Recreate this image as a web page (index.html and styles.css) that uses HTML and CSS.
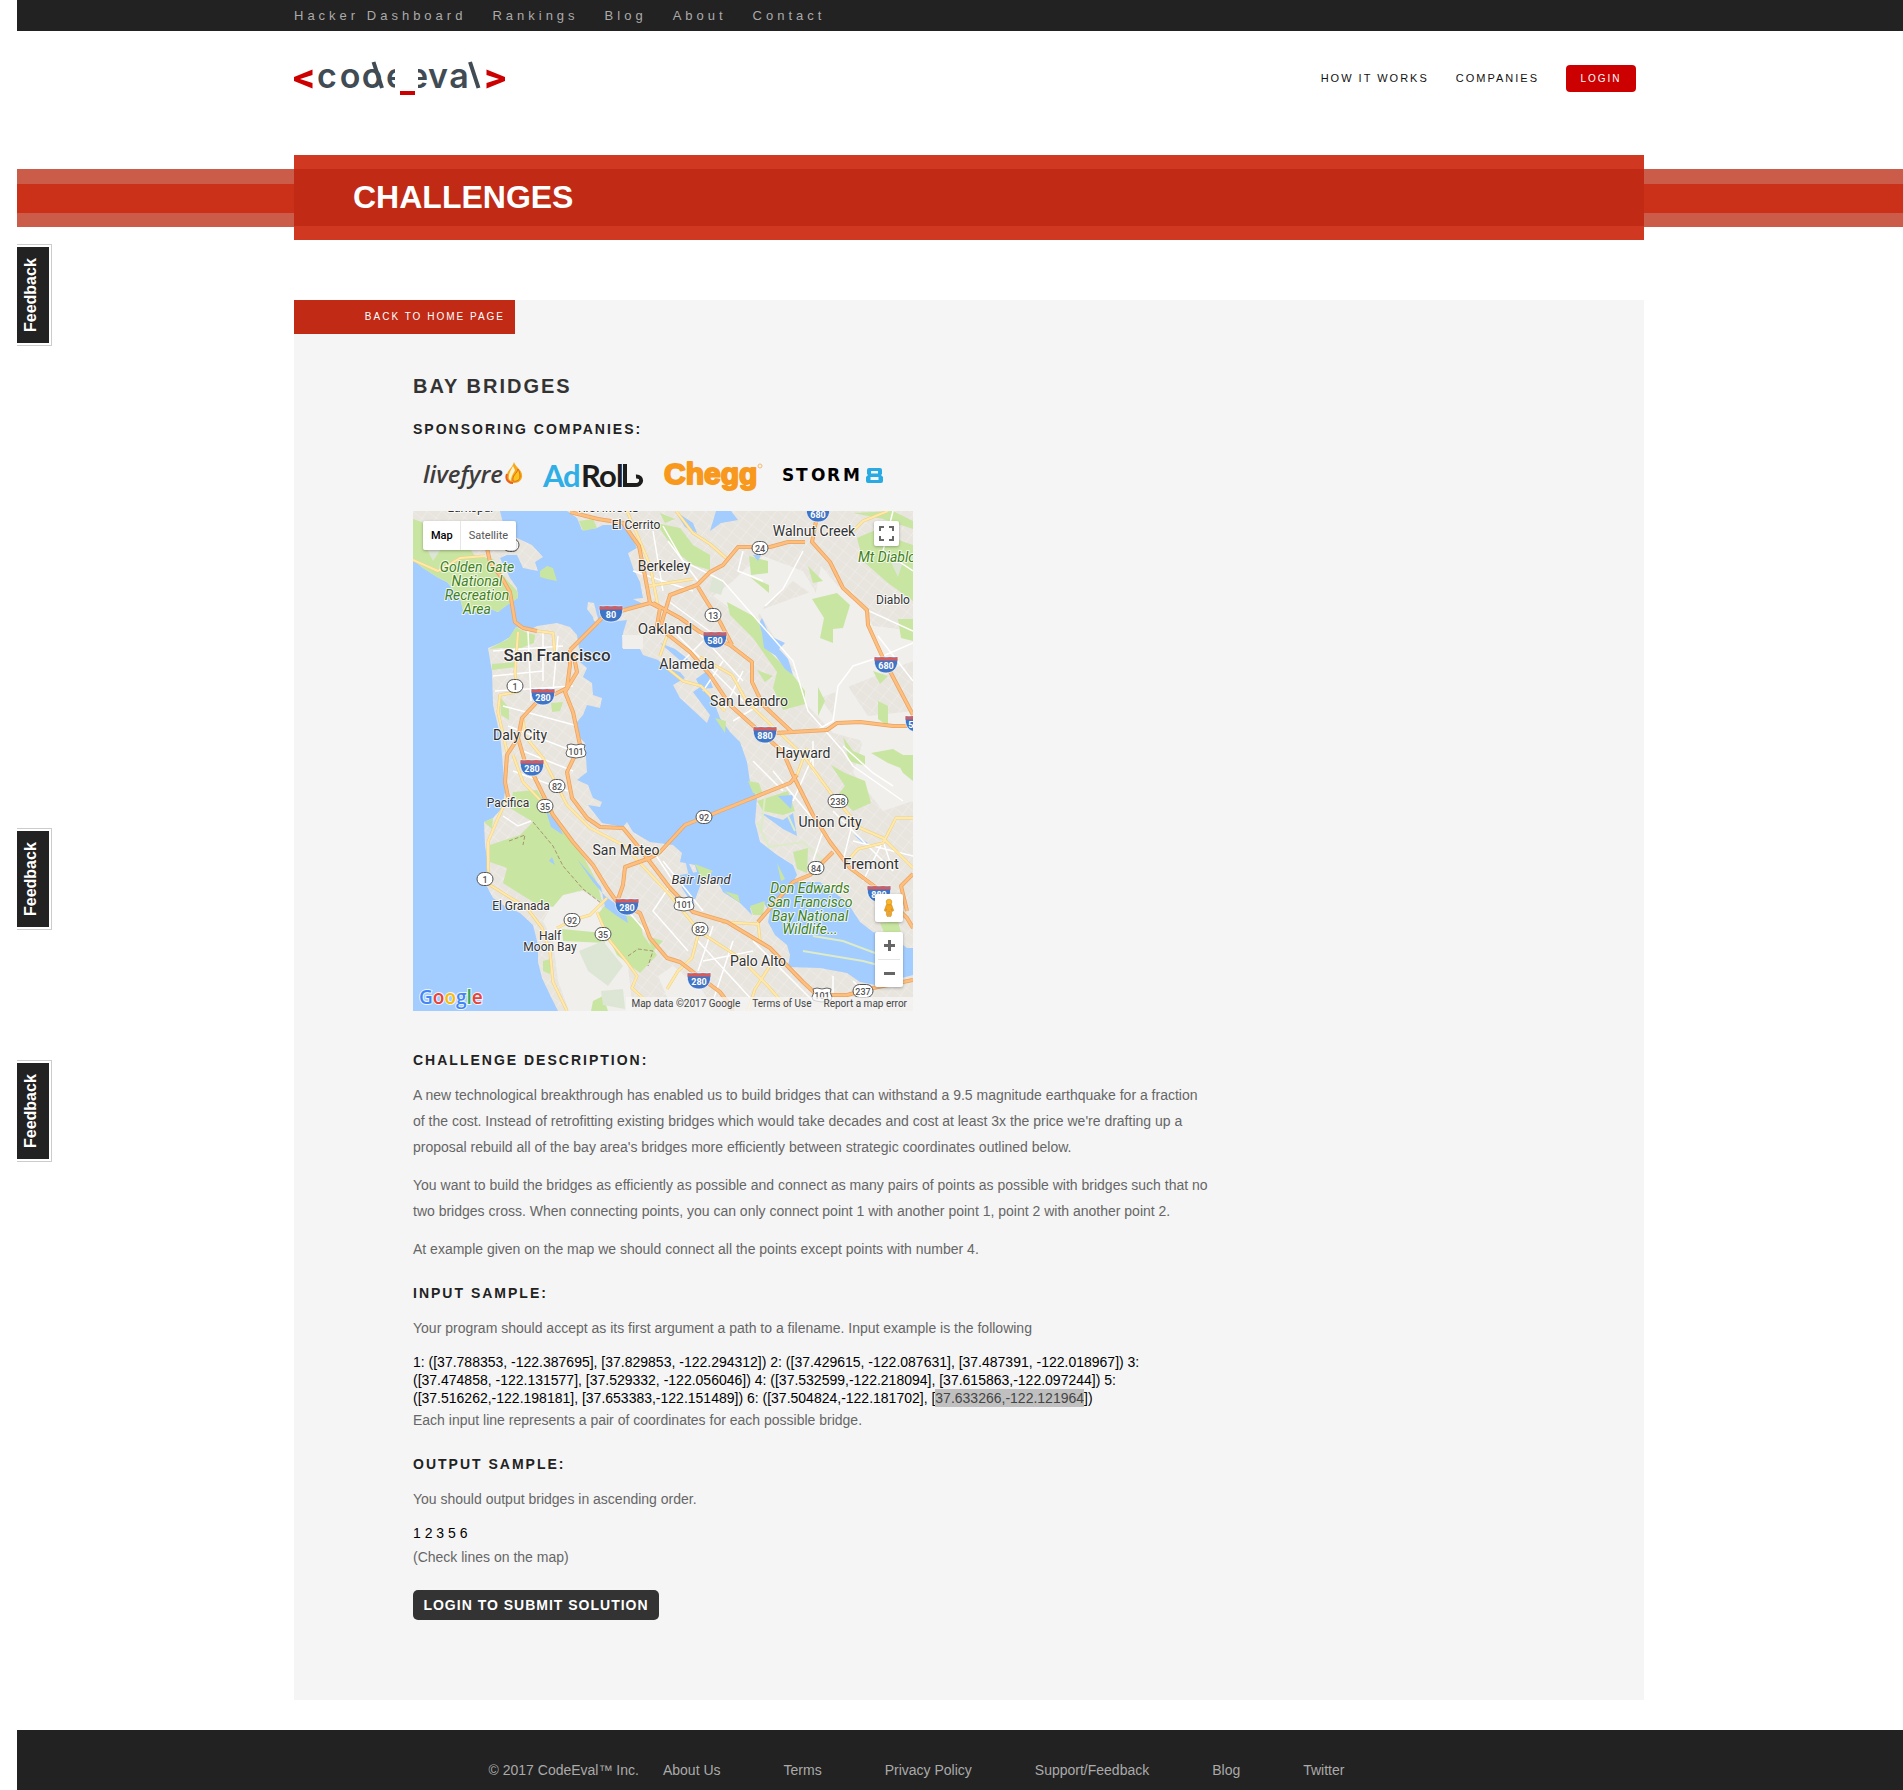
FILE: index.html
```html
<!DOCTYPE html>
<html lang="en">
<head>
<meta charset="utf-8">
<title>Bay Bridges - CodeEval</title>
<link rel="stylesheet" href="styles.css">
</head>
<body>
<div class="topbar">
  <nav class="container topnav">
    <a href="#">Hacker Dashboard</a><a href="#">Rankings</a><a href="#">Blog</a><a href="#">About</a><a href="#">Contact</a>
  </nav>
</div>
<header class="container header">
  <a href="#" class="logo" aria-label="CodeEval">
    <svg width="212" height="38" viewBox="0 0 212 38">
      <defs>
        <clipPath id="e-left"><rect x="90" y="0" width="11" height="38"/></clipPath>
        <clipPath id="e-right"><rect x="124" y="0" width="12" height="38"/></clipPath>
      </defs>
      <path class="logo-mark" d="M18.500 9.500V15L6 19L18.500 23V28.500L0 21V17ZM192.500 9.500V15L205 19L192.500 23V28.500L211 21V17ZM106 31H121V35H106Z"/>
      <g class="logo-text">
        <text x="33" y="28">c</text><text x="56" y="28">o</text><text x="78" y="28">o</text>
        <g clip-path="url(#e-left)"><text x="102" y="28">e</text></g>
        <g clip-path="url(#e-right)"><text x="124" y="28">e</text></g>
        <text x="144" y="28">v</text><text x="165" y="28">a</text>
      </g>
      <path class="logo-stroke" d="M79.500 2L88 28M176 2L184.500 28"/>
    </svg>
  </a>
  <nav class="mainnav">
    <a href="#">HOW IT WORKS</a><a href="#">COMPANIES</a><button class="login" type="button">LOGIN</button>
  </nav>
</header>
<div class="banner">
  <div class="container"><div class="banner-box"><h1>CHALLENGES</h1></div></div>
</div>
<main class="container">
  <div class="panel">
    <a href="#" class="back">BACK TO HOME PAGE</a>
    <article class="article">
      <h2>BAY BRIDGES</h2>
      <h3>SPONSORING COMPANIES:</h3>
      <div class="sponsors">
        <svg width="100" height="30" viewBox="0 0 100 30" aria-label="livefyre">
          <text class="sp-livefyre" x="0" y="22">livefyre</text>
          <path d="M91 1C93 7 100 9 99 16C98 21 94 22 90 22C85 22 82 18 84 13C85 9 90 6 91 1Z" fill="#f6a81c"/>
          <path d="M90 5C88 9 85 13 86 18L88 20C88 15 91 12 92 9Z" fill="#fff3c9"/>
          <path d="M95 8C94 13 89 14 90 20C94 21 97 19 97 15C97 12 96 10 95 8Z" fill="#f8c51c" stroke="#e36b22"/>
          <path d="M84 13C82 18 85 22 90 22" fill="none" stroke="#e8611f" stroke-width="2"/>
        </svg>
        <svg width="100" height="30" viewBox="0 0 100 30" aria-label="AdRoll">
          <g class="sp-adroll"><text x="0" y="26" class="blue">A</text><text x="20" y="26" class="blue">d</text>
          <text x="38" y="26">R</text><text x="56" y="26">o</text><text x="73" y="26">l</text></g>
          <path d="M82 3V24H92C100 24 100 15 93 15.500" fill="none" stroke="#1d1d1b" stroke-width="4"/>
        </svg>
        <svg width="100" height="30" viewBox="0 0 100 30" aria-label="Chegg">
          <text class="sp-chegg" x="1" y="23">Chegg</text>
          <circle cx="97" cy="5" r="2" fill="none" stroke="#f8b866"/>
        </svg>
        <svg width="100" height="30" viewBox="0 0 100 30" aria-label="Storm8">
          <text class="sp-storm" x="-1 13 28 44 60" y="20">STORM</text>
          <path d="M86 7H97Q99 7 99 9V13L98 14L100 16V20Q100 22 98 22H85Q83 22 83 20V16L85 14L84 13V9Q84 7 86 7ZM88 10V12.500H95V10ZM87.500 16V19H95.500V16Z" fill="#29aae3" fill-rule="evenodd"/>
        </svg>
      </div>
      <div class="map">
        <svg class="map-art" viewBox="0 0 500 500" aria-label="Map of the San Francisco Bay Area">
          <defs>
            <pattern id="st" width="11" height="9" patternUnits="userSpaceOnUse" patternTransform="rotate(38)"><path d="M0 0H11M0 0V9" stroke="#fff" stroke-width="1.200" fill="none"/></pattern>
            <g id="land">
              <path d="M0 0H87L92 20L104 27L119 34L130 46L122 51L125 60L110 57L104 44L94 44L87 47L97 67L104 77L105 87L94 94L85 101L75 97L64 101L50 99L47 87L34 71L24 66L10 57L0 49Z"/>
              <path d="M175 91L181 92L184 104L187 113L181 110L180 106L174 98Z"/>
              <path d="M75 137L87 132L97 126L103 116L114 120L124 115L144 112L157 116L164 124L166 137L167 151L174 157L170 166L179 172L180 184L189 187L187 197L174 194L170 204L164 211L164 224L172 232L174 261L164 269L175 274L180 287L189 291L187 296L175 294L189 312L210 316L214 311L220 321L237 331L260 334L269 342L267 351L282 354L284 361L267 364L269 377L280 394L290 367L304 369L310 381L327 392L339 404L337 397L350 391L357 401L355 411L362 424L374 434L377 444L375 456L407 457L434 462L447 471L462 474L500 464V500H145L137 484L129 467L125 451V434L120 414L107 402L90 394L80 387L72 372L75 354L72 334L71 311L80 307L89 297L92 281L89 244L87 224L80 194L79 161Z"/>
              <path d="M154 0L164 7L169 19L184 17L190 14H210L219 27L224 37L215 42L220 57L227 71L230 87L220 88L232 94L210 101L197 111L214 109L210 122L209 137L227 138L230 144L245 149L254 157L267 161L272 167L260 174L267 187L294 212L297 204L280 181L290 174L302 194L307 207L317 221L327 231L334 251L337 271L344 287L342 311L347 331L364 344L380 354L384 364L380 371L407 371L434 391L447 411L460 421L477 424L494 437H500V0Z"/>
            </g>
            <g id="orange">
              <path d="M74 37L77 51L89 67L97 81L102 111L110 117L124 120M157 139L190 106L204 101L237 92L232 65L226 35L210 12L185 8L157 1"/>
              <path d="M157 139L157 154L154 177L140 184L124 191L109 207L105 227L112 251L119 261L140 304L160 331L180 354L194 377L204 391L227 402L237 427L254 447L267 451L284 464L307 481L317 494L320 500"/>
              <path d="M160 141L164 161L152 181L160 201L167 234L154 261L159 287L174 307L187 316L210 317L224 334L257 377L280 401L314 411L357 437L390 471L404 484H434L460 477L500 469"/>
              <path d="M105 227L94 244L92 271L95 286M384 264L377 272L327 292L272 314L247 341L237 347L212 356L210 374L204 391"/>
              <path d="M237 92L247 97L244 115L277 141L297 164L317 194L347 221L370 241L380 264L400 304L417 331L437 357L464 377L494 407L500 417"/>
              <path d="M240 92L267 107L287 121L317 134L339 151V171L350 194L379 221L414 219L424 212L447 211L480 215H500M347 223L379 221"/>
              <path d="M248 114L257 84L284 74L297 61L310 54L325 36H357L375 31H392M285 76L294 91L307 111L319 134"/>
              <path d="M405 0L399 31L417 51L430 77L454 99L455 114L470 147L500 204M345 411L380 371L397 364L420 341"/>
              <path d="M500 363L488 375L494 400"/>
            </g>
            <g id="yellow">
              <path d="M0 49L25 60L47 47L72 45M214 0L237 54L245 95M236 75L280 68M263 0L280 22L297 33L313 47"/>
              <path d="M105 121L102 161L104 181L87 184L85 201L94 241M110 207L112 225L130 247L137 261L154 294L177 317L210 334L257 384L287 421L327 447L354 474L374 497"/>
              <path d="M100 244L110 271L132 294M85 307L75 331L75 357L77 374L114 397L129 417L137 441L140 471L154 500M95 286L85 307"/>
              <path d="M287 146L319 164L334 191L390 244L417 281L447 317L470 327L500 357M384 264L394 237M437 347L445 338L470 332L483 307H500"/>
              <path d="M144 417L160 409L177 404L194 387M184 401L190 415L194 426L214 451L224 465L219 477L234 491M254 478L265 460L279 447L286 420M335 500L342 478L360 450M345 411L347 430L355 436M309 411L345 413"/>
              <path d="M124 120L140 122L142 145M440 20L450 10L475 0M247 145L255 122M254 157L270 170L288 175L312 200"/>
            </g>
            <g id="i-shield"><path d="M-11.500-8H11.500C13 2 8 8 0 8S-13 2-11.500-8Z" fill="#3f75c6" stroke="#fff" stroke-width=".7"/><path d="M-11.500-4.500V-8L-8-7L-4-8L0-7L4-8L8-7L11.500-8V-4.500Z" fill="#d65c5c"/></g>
            <rect id="pill" x="-8" y="-6.500" width="16" height="13" rx="6.500" fill="#fff" stroke="#555"/>
            <rect id="pill3" x="-10" y="-6.500" width="20" height="13" rx="6.500" fill="#fff" stroke="#555"/>
            <path id="us" d="M-9-6L-5-7L0-6L5-7L9-6Q7-3 10 2Q10 6 6 6L0 7L-6 6Q-10 6-10 2Q-7-3-9-6Z" fill="#fff" stroke="#666"/>
          </defs>
          <rect width="500" height="500" fill="#a3ccff"/>
          <use href="#land" fill="#e8e4de"/>
          <use href="#land" fill="url(#st)" opacity=".45"/>
          <g fill="#f0efeb">
            <path d="M330 60L350 45L390 60L402 80L395 100L402 140L425 160L500 135V120L460 115L440 82L425 75L408 55L402 85L380 70L352 95L345 105L365 150L395 170L420 205L425 160L455 205L500 200V290L470 300L440 262L450 230L420 222L395 195L340 115L300 85L320 70Z"/>
            <path d="M345 100L400 80L460 115L500 120V150L425 180L400 190L370 140Z"/>
            <path d="M150 384L170 380L188 392L192 420L215 455L220 500H156L145 470L140 430L130 410L138 396ZM260 500L245 465L260 455L290 480L300 500ZM440 215H500V280L465 265L450 235ZM209 124H230V138H210Z"/>
          </g>
          <g fill="#c9e5a2">
            <path d="M0 8L20 15L40 12L50 28L62 45L80 48L93 68L104 80L105 87L94 94L85 101L75 97L64 101L50 99L47 87L34 71L24 66L10 57L0 49ZM127 60L134 55L140 57L144 70L134 68L127 66ZM95 128L103 116L112 121L122 124L121 132L108 137L88 137L76 138L87 132ZM79 153L103 151V156L79 159ZM138 192L150 191L147 200L139 201ZM87 186L96 197V209L88 204Z"/>
            <path d="M100 281L124 279L140 304L164 334L184 371L189 391L170 379L150 384L140 396L120 391L90 372L94 357L77 351V334L107 324L120 311L97 297ZM194 392L227 411L230 424L244 444L227 462L204 444L184 404ZM149 418L190 422L192 432L150 430ZM71 311L80 307L79 318ZM130 450L137 448V463L130 460Z"/>
            <path d="M166 10L180 8L184 17L170 20ZM243 12L267 17L280 34L297 44V59L280 54L262 40ZM247 2L262 8L252 12ZM314 91L344 107L357 141L380 164L392 180V193L370 199L360 177L364 161L340 127L317 104ZM399 88L424 82L437 94L430 117L420 118V132L407 127L411 107ZM444 27L460 20L480 27L500 34V90L475 72L450 50ZM336 45L355 50V62L338 64ZM337 66L356 74V82ZM395 55L410 70L400 72ZM440 2L480 0L500 10V18L470 8ZM460 160L475 165L467 173ZM485 108H500V130L488 127ZM465 190L475 195V215L465 208ZM405 176L412 190L405 205ZM458 242L480 238L500 250V262L475 252ZM430 226L440 240L452 245V255L436 250ZM418 254L432 262L452 270L458 292L440 300L424 285L432 275ZM480 244H500V270L490 262ZM302 207L313 210L312 222ZM344 159L360 165L352 171Z"/>
            <path d="M344 290L375 280L382 300L370 304L350 300ZM335 270L346 272L350 284L340 282ZM380 341L395 337L394 362L384 358ZM364 352L372 368L368 370ZM311 380L325 384L327 392ZM337 395L352 390L350 404L340 404ZM282 353L300 360L290 370ZM467 412L485 410L488 422L472 424ZM180 490L190 485L195 500H178ZM234 425L250 430L240 440Z"/>
          </g>
          <g fill="#dde6d4"><path d="M166 440L190 430L210 455L195 475L175 460ZM188 480L210 478L212 498L190 494ZM300 65L312 72L308 84L296 80ZM475 45L490 50L485 66ZM10 30L30 35L20 50Z"/></g>
          <g fill="#a3ccff">
            <path d="M133 300L145 312L150 324L138 316ZM164 348L180 371L192 385L212 400L215 412L204 405L192 396L188 376ZM247 132L262 138L275 148L270 152ZM283 168L294 160L300 177L288 178ZM262 0L280 12L284 22L272 16ZM297 20L303 0H318L325 9L308 12ZM340 44L348 44L345 50ZM440 323L455 332L452 334ZM270 340L285 372L278 374ZM139 346L142 354L136 350Z"/>
            <path d="M349 107L357 125L372 132L366 138L375 148L380 164L372 158L363 145L351 137L349 122L346 112Z"/>
            <path d="M348 302L370 309L380 302L384 325L370 318ZM365 285L380 284L378 298Z"/>
          </g>
          <path d="M344 311L356 336L390 331L410 350M352 286L348 320M375 305L382 320M390 440L420 445L450 450L480 458M400 425L430 430L470 445" fill="none" stroke="#dcebc8" stroke-width="2"/>
          <path d="M120 311L140 335L150 355L170 378L188 392M215 445L225 438L240 440L235 455M96 330L112 324L110 334" fill="none" stroke="#a59670" stroke-dasharray="4 2"/>
          <g class="minor">
            <path d="M80 140L150 135M80 165L130 160M82 180L160 175M115 120L118 190M130 120V170M145 125L140 180M90 195L165 215M95 215L160 240M110 240L160 260M100 260L155 280"/>
            <path d="M350 70L325 60L330 40M352 95L370 78L390 40M454 99L500 120M402 220L420 210L425 175L440 155L470 145L500 132M480 0L470 40L500 60M500 170L465 125M250 15L270 50L310 70L345 110L380 150L395 200L430 240L440 255L490 290M430 235L460 262L480 275"/>
            <path d="M400 230V260L440 310L430 350L470 380M360 260L410 320L400 350M350 230L400 245L380 290M340 250L370 280M420 300L480 360L470 330L450 370M440 330L500 345"/>
            <path d="M90 305L105 315L118 310M215 400L245 435M240 340L260 370L240 400L275 440M250 350L290 400M285 430L340 490M290 450L340 440M300 415L285 460M320 430L300 490M340 430L400 490M420 465V500M440 470L470 500"/>
            <path d="M220 60L280 80M240 20L250 80M255 30L285 70M255 90L310 130M260 120L330 190M275 110L330 170M290 130L270 150M310 150L290 180M330 160L310 200M345 195L320 210"/>
          </g>
          <use href="#yellow" class="y-case"/><use href="#yellow" class="y-fill"/>
          <use href="#orange" class="o-case"/><use href="#orange" class="o-fill"/>
          <g>
            <use href="#i-shield" x="198" y="103"/><use href="#i-shield" x="130" y="186"/><use href="#i-shield" x="119" y="257"/><use href="#i-shield" x="214" y="396"/><use href="#i-shield" x="286" y="470"/><use href="#i-shield" x="302" y="129"/><use href="#i-shield" x="352" y="224"/><use href="#i-shield" x="473" y="154"/><use href="#i-shield" x="405" y="3"/><use href="#i-shield" x="466" y="383"/><use href="#i-shield" x="504" y="213"/>
            <use href="#pill" x="102" y="175"/><use href="#pill" x="72" y="368"/><use href="#pill" x="144" y="275"/><use href="#pill" x="132" y="295"/><use href="#pill" x="159" y="409"/><use href="#pill" x="190" y="423"/><use href="#pill" x="347" y="37"/><use href="#pill" x="300" y="104"/><use href="#pill" x="291" y="306"/><use href="#pill" x="403" y="357"/><use href="#pill" x="287" y="418"/><use href="#pill3" x="425" y="290"/><use href="#pill3" x="450" y="480"/><use href="#pill" x="98" y="34"/>
            <use href="#us" x="163" y="240"/><use href="#us" x="271" y="393"/><use href="#us" x="409" y="484"/>
          </g>
          <g class="i-num"><text x="198" y="107">80</text><text x="130" y="190">280</text><text x="119" y="261">280</text><text x="214" y="400">280</text><text x="286" y="474">280</text><text x="302" y="133">580</text><text x="352" y="228">880</text><text x="473" y="158">680</text><text x="405" y="7">680</text><text x="466" y="387">880</text><text x="503" y="217">580</text></g>
          <g class="r-num"><text x="102" y="179">1</text><text x="72" y="372">1</text><text x="144" y="279">82</text><text x="132" y="299">35</text><text x="159" y="413">92</text><text x="190" y="427">35</text><text x="347" y="41">24</text><text x="300" y="108">13</text><text x="291" y="310">92</text><text x="403" y="361">84</text><text x="287" y="422">82</text><text x="425" y="294">238</text><text x="450" y="484">237</text><text x="163" y="244">101</text><text x="271" y="397">101</text><text x="409" y="488">101</text></g>
          <g class="lbl">
            <text class="s17" x="144" y="150">San Francisco</text>
            <text class="s15" x="252" y="123">Oakland</text><text class="s15" x="458" y="358">Fremont</text>
            <text class="s14" x="107" y="229">Daly City</text><text class="s14" x="213" y="344">San Mateo</text><text class="s14" x="251" y="60">Berkeley</text><text class="s14" x="401" y="25">Walnut Creek</text><text class="s14" x="274" y="158">Alameda</text><text class="s14" x="336" y="195">San Leandro</text><text class="s14" x="390" y="247">Hayward</text><text class="s14" x="417" y="316">Union City</text><text class="s14" x="345" y="455">Palo Alto</text>
            <text class="s12" x="223" y="18">El Cerrito</text><text class="s12" x="95" y="296">Pacifica</text><text class="s12" x="108" y="399">El Granada</text><text class="s12" x="137" y="429">Half</text><text class="s12" x="137" y="440">Moon Bay</text><text class="s12" x="480" y="93">Diablo</text><text class="s12" x="58" y="1">Larkspur</text><text class="s12" x="196" y="1">RICHMOND</text>
            <text class="s13 it" x="288" y="373">Bair Island</text>
          </g>
          <g class="lbl park it"><text x="64" y="61">Golden Gate</text><text x="64" y="75">National</text><text x="64" y="89">Recreation</text><text x="64" y="103">Area</text><text x="397" y="382">Don Edwards</text><text x="397" y="396">San Francisco</text><text x="397" y="410">Bay National</text><text x="397" y="423">Wildlife...</text><text x="474" y="51">Mt Diablo</text></g>
          <text class="google" x="6" y="493"><tspan fill="#4285f4">G</tspan><tspan fill="#ea4335">o</tspan><tspan fill="#fbbc05">o</tspan><tspan fill="#4285f4">g</tspan><tspan fill="#34a853">l</tspan><tspan fill="#ea4335">e</tspan></text>
        </svg>
        <div class="map-type"><button type="button" class="on">Map</button><button type="button">Satellite</button></div>
        <button type="button" class="map-full" aria-label="Full screen"><svg width="15" height="15" viewBox="0 0 15 15"><path d="M1 5V1H5M10 1H14V5M14 10V14H10M5 14H1V10" fill="none" stroke="#666" stroke-width="2"/></svg></button>
        <button type="button" class="map-man" aria-label="Street View"><svg width="12" height="20" viewBox="0 0 14 22"><path d="M4 7H10L12.500 14L11 15L10 12V19L9 21H7.500V15H6.500V21H5L4 19V12L3 15L1.500 14Z" fill="#f4a620" stroke="#c77f12" stroke-width=".6"/><circle cx="7" cy="4" r="3.300" fill="#fbb829" stroke="#c77f12" stroke-width=".6"/></svg></button>
        <div class="map-zoom">
          <button type="button" aria-label="Zoom in"><svg width="11" height="11" viewBox="0 0 11 11"><path d="M0 5.500H11M5.500 0V11" stroke="#666" stroke-width="3"/></svg></button>
          <button type="button" aria-label="Zoom out"><svg width="11" height="11" viewBox="0 0 11 11"><path d="M0 5.500H11" stroke="#666" stroke-width="3"/></svg></button>
        </div>
        <div class="map-legal"><span>Map data ©2017 Google</span><a href="#">Terms of Use</a><a href="#">Report a map error</a></div>
      </div>
      <h3>CHALLENGE DESCRIPTION:</h3>
      <p>A new technological breakthrough has enabled us to build bridges that can withstand a 9.5 magnitude earthquake for a fraction of the cost. Instead of retrofitting existing bridges which would take decades and cost at least 3x the price we're drafting up a proposal rebuild all of the bay area's bridges more efficiently between strategic coordinates outlined below.</p>
      <p>You want to build the bridges as efficiently as possible and connect as many pairs of points as possible with bridges such that no two bridges cross. When connecting points, you can only connect point 1 with another point 1, point 2 with another point 2.</p>
      <p>At example given on the map we should connect all the points except points with number 4.</p>
      <h3>INPUT SAMPLE:</h3>
      <p>Your program should accept as its first argument a path to a filename. Input example is the following</p>
      <div class="sample">1: ([37.788353, -122.387695], [37.829853, -122.294312]) 2: ([37.429615, -122.087631], [37.487391, -122.018967]) 3:<br>([37.474858, -122.131577], [37.529332, -122.056046]) 4: ([37.532599,-122.218094], [37.615863,-122.097244]) 5:<br>([37.516262,-122.198181], [37.653383,-122.151489]) 6: ([37.504824,-122.181702], [<mark>37.633266,-122.121964</mark>])</div>
      <p>Each input line represents a pair of coordinates for each possible bridge.</p>
      <h3>OUTPUT SAMPLE:</h3>
      <p>You should output bridges in ascending order.</p>
      <div class="sample result">1 2 3 5 6</div>
      <p>(Check lines on the map)</p>
      <button class="submit" type="button">LOGIN TO SUBMIT SOLUTION</button>
    </article>
  </div>
</main>
<footer class="footer">
  <span>© 2017 CodeEval™ Inc.</span>
  <nav><a href="#">About Us</a><a href="#">Terms</a><a href="#">Privacy Policy</a><a href="#">Support/Feedback</a><a href="#">Blog</a><a href="#">Twitter</a></nav>
</footer>
<a href="#" class="feedback first"><span>Feedback</span></a>
<a href="#" class="feedback second"><span>Feedback</span></a>
<a href="#" class="feedback third"><span>Feedback</span></a>
</body>
</html>
```
FILE: styles.css
```css
* { box-sizing: border-box; }
body {
  position: relative;
  margin: 0 0 0 17px;
  background: #fff;
  color: #666;
  font: 14px/26px "Liberation Sans", Arial, sans-serif;
}
a { color: inherit; text-decoration: none; }
h1, h2, h3, p { margin: 0; }
button { border: 0; padding: 0; font-family: inherit; cursor: pointer; }
svg { display: block; overflow: visible; }

.container { max-width: 1368px; margin: 0 auto; padding-left: 18px; }

.topbar { background: #222; }
.topnav { display: flex; gap: 26px; height: 31px; color: #aaa; font-size: 13px; line-height: 31px; letter-spacing: 4px; }

.header { display: flex; justify-content: space-between; align-items: flex-start; height: 124px; padding-top: 29px; }
.logo-mark { fill: #c00; }
.logo-text { fill: #414b54; font: 600 34px Inter, sans-serif; text-anchor: middle; }
.logo-stroke { fill: none; stroke: #414b54; stroke-width: 4; }
.mainnav { display: flex; align-items: center; gap: 27px; padding: 5px 8px 0 0; color: #111; font-size: 11px; line-height: 27px; letter-spacing: 2px; }
.login { width: 70px; height: 27px; border-radius: 4px; background: #c00; color: #fff; font-size: 10px; letter-spacing: 2px; }

.banner {
  height: 85px;
  background: linear-gradient(#fff 14px, #cb5c4a 14px 29px, #cb3119 29px 58px, #cb5c4a 58px 72px, #fff 72px);
}
.banner-box { height: 85px; padding-left: 59px; background: linear-gradient(#d13822 14px, #c12a15 14px 71px, #d13822 71px); }
.banner h1 { color: #fff; font-size: 32px; line-height: 84px; }

.panel { margin-top: 60px; padding-bottom: 80px; background: #f5f5f5; }
.back { display: block; width: 221px; height: 34px; padding-right: 10px; background: #c12a15; color: #fff; font-size: 10px; line-height: 34px; letter-spacing: 2px; text-align: right; }
.article { max-width: 919px; padding: 38px 0 0 119px; }
.article h2 { color: #333; font-size: 20px; line-height: 28px; letter-spacing: 2px; }
.article h3 { margin: 19px 0 10px; color: #222; font-size: 14px; line-height: 24px; letter-spacing: 2px; }
.article h2 + h3 { margin-top: 17px; }
.article p { margin-bottom: 12px; }
.sponsors { display: flex; gap: 20px; padding: 10px; height: 60px; }
.sp-livefyre { fill: #403c3b; font: italic 600 24px "Open Sans", sans-serif; }
.sp-adroll { fill: #1d1d1b; font: bold 31px Lato, sans-serif; }
.sp-adroll .blue { fill: #30aee6; }
.sp-chegg { fill: #f8991d; stroke: #f8991d; stroke-width: 2; stroke-linejoin: round; font: bold 30px "Liberation Sans", sans-serif; }
.sp-storm { font: bold 17px "DejaVu Sans", sans-serif; }

.map { position: relative; width: 500px; max-width: 100%; margin-bottom: 37px; overflow: hidden; font-family: Roboto, sans-serif; }
.map-art { width: 100%; overflow: hidden; }
.minor { fill: none; stroke: #fff; stroke-width: 1.5; }
.y-case, .y-fill, .o-case, .o-fill { fill: none; stroke-linejoin: round; }
.y-case { stroke: #f0cf83; stroke-width: 3; }
.y-fill { stroke: #ffe9a8; stroke-width: 2; }
.o-case { stroke: #eca35c; stroke-width: 4; }
.o-fill { stroke: #fdbf80; stroke-width: 2.5; }
.i-num, .r-num { font: bold 9px Roboto, sans-serif; text-anchor: middle; }
.i-num { fill: #fff; }
.r-num { fill: #555; font-weight: 500; }
.lbl { fill: #333; stroke: #fff; stroke-width: 2; stroke-opacity: .8; stroke-linejoin: round; paint-order: stroke; text-anchor: middle; }
.s17 { font-size: 17px; font-weight: 500; }
.s15 { font-size: 15px; }
.s14 { font-size: 14px; }
.s13 { font-size: 13px; }
.s12 { font-size: 12px; }
.it { font-style: italic; }
.park { fill: #3f8118; font-size: 14px; }
.google { font: 600 19px "Open Sans", sans-serif; stroke: #fff; stroke-width: 2; stroke-opacity: .8; paint-order: stroke; }
.map-type, .map-full, .map-man, .map-zoom { position: absolute; background: #fff; border-radius: 2px; box-shadow: 0 1px 3px rgba(0,0,0,.3); }
.map-type { display: flex; left: 10px; top: 10px; height: 29px; }
.map-type button { padding: 0 8px; background: none; color: #565656; font-size: 11px; }
.map-type .on { padding-right: 7px; color: #000; font-weight: 500; border-right: 1px solid #e6e6e6; }
.map-full { display: grid; place-items: center; right: 14px; top: 10px; width: 25px; height: 25px; }
.map-man { display: grid; place-items: center; right: 10px; bottom: 89px; width: 28px; height: 28px; }
.map-zoom { display: flex; flex-direction: column; right: 10px; bottom: 24px; width: 28px; height: 55px; }
.map-zoom button { flex: 1; display: grid; place-items: center; margin: 0 3px; background: none; }
.map-zoom button + button { border-top: 1px solid #e6e6e6; }
.map-legal { position: absolute; right: 0; bottom: 0; display: flex; gap: 12px; padding: 0 6px 0 5px; background: rgba(245,245,245,.75); color: #444; font-size: 10px; line-height: 14px; }

.sample { color: #000; line-height: 18px; }
.result { margin-bottom: 2px; }
mark { padding: 1px 0; background: #c0c0c0; color: #444; }
.submit { display: block; width: 246px; height: 30px; margin-top: 20px; border-radius: 5px; background: #333; color: #fff; font-size: 14px; font-weight: bold; letter-spacing: 1px; }

.footer { display: flex; justify-content: center; gap: 24px; margin-top: 30px; height: 60px; padding: 27px 87px 0 0; background: #222; color: #aaa; }
.footer nav { display: flex; gap: 63px; }

.feedback { position: absolute; left: 0; width: 35px; height: 102px; padding: 2px 2px 2px 0; border: 1px solid #ccc; border-left: 0; background: #fff; color: #fff; font-size: 16px; font-weight: bold; line-height: 28px; text-align: center; }
.feedback span { display: block; width: 32px; height: 96px; background: #222; writing-mode: vertical-rl; transform: rotate(180deg); }
.first { top: 244px; }
.second { top: 828px; }
.third { top: 1060px; }
```
